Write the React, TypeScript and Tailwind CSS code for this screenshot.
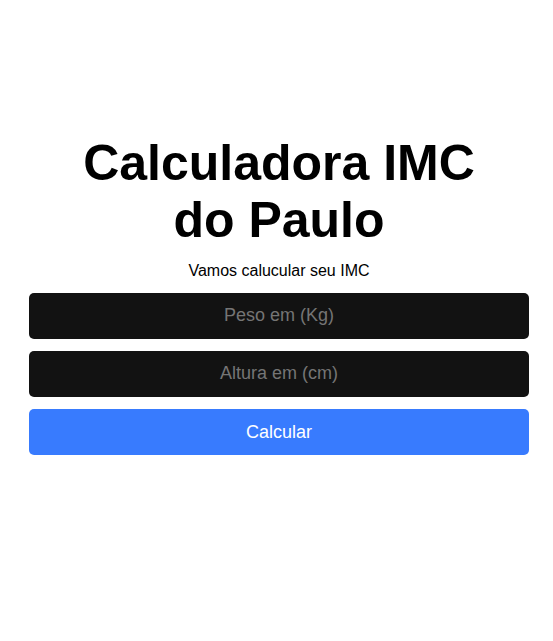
import React from "react";

const App = () => {
  return (
    <div
      className="min-h-screen bg-white flex flex-col items-center justify-center pl-[5px] pb-[52px]"
      style={{ fontFamily: '"Liberation Sans", Arial, sans-serif' }}
    >
      <div className="w-[500px] flex flex-col items-center">
        <h1 className="text-[50px] font-bold leading-[57px] text-black text-center">
          Calculadora IMC
          <br />
          do Paulo
        </h1>
        <p className="text-base text-black mt-[10px] mb-[10px]">
          Vamos calucular seu IMC
        </p>
        <input
          type="text"
          inputMode="decimal"
          placeholder="Peso em (Kg)"
          className="w-full h-[46px] rounded-[5px] bg-[#121212] text-white text-center text-lg placeholder:text-[#757575] outline-none"
        />
        <input
          type="text"
          inputMode="decimal"
          placeholder="Altura em (cm)"
          className="w-full h-[46px] mt-3 rounded-[5px] bg-[#121212] text-white text-center text-lg placeholder:text-[#757575] outline-none"
        />
        <button className="w-full h-[46px] mt-3 rounded-[5px] bg-[#387bfe] text-white text-lg">
          Calcular
        </button>
      </div>
    </div>
  );
};

export default App;
